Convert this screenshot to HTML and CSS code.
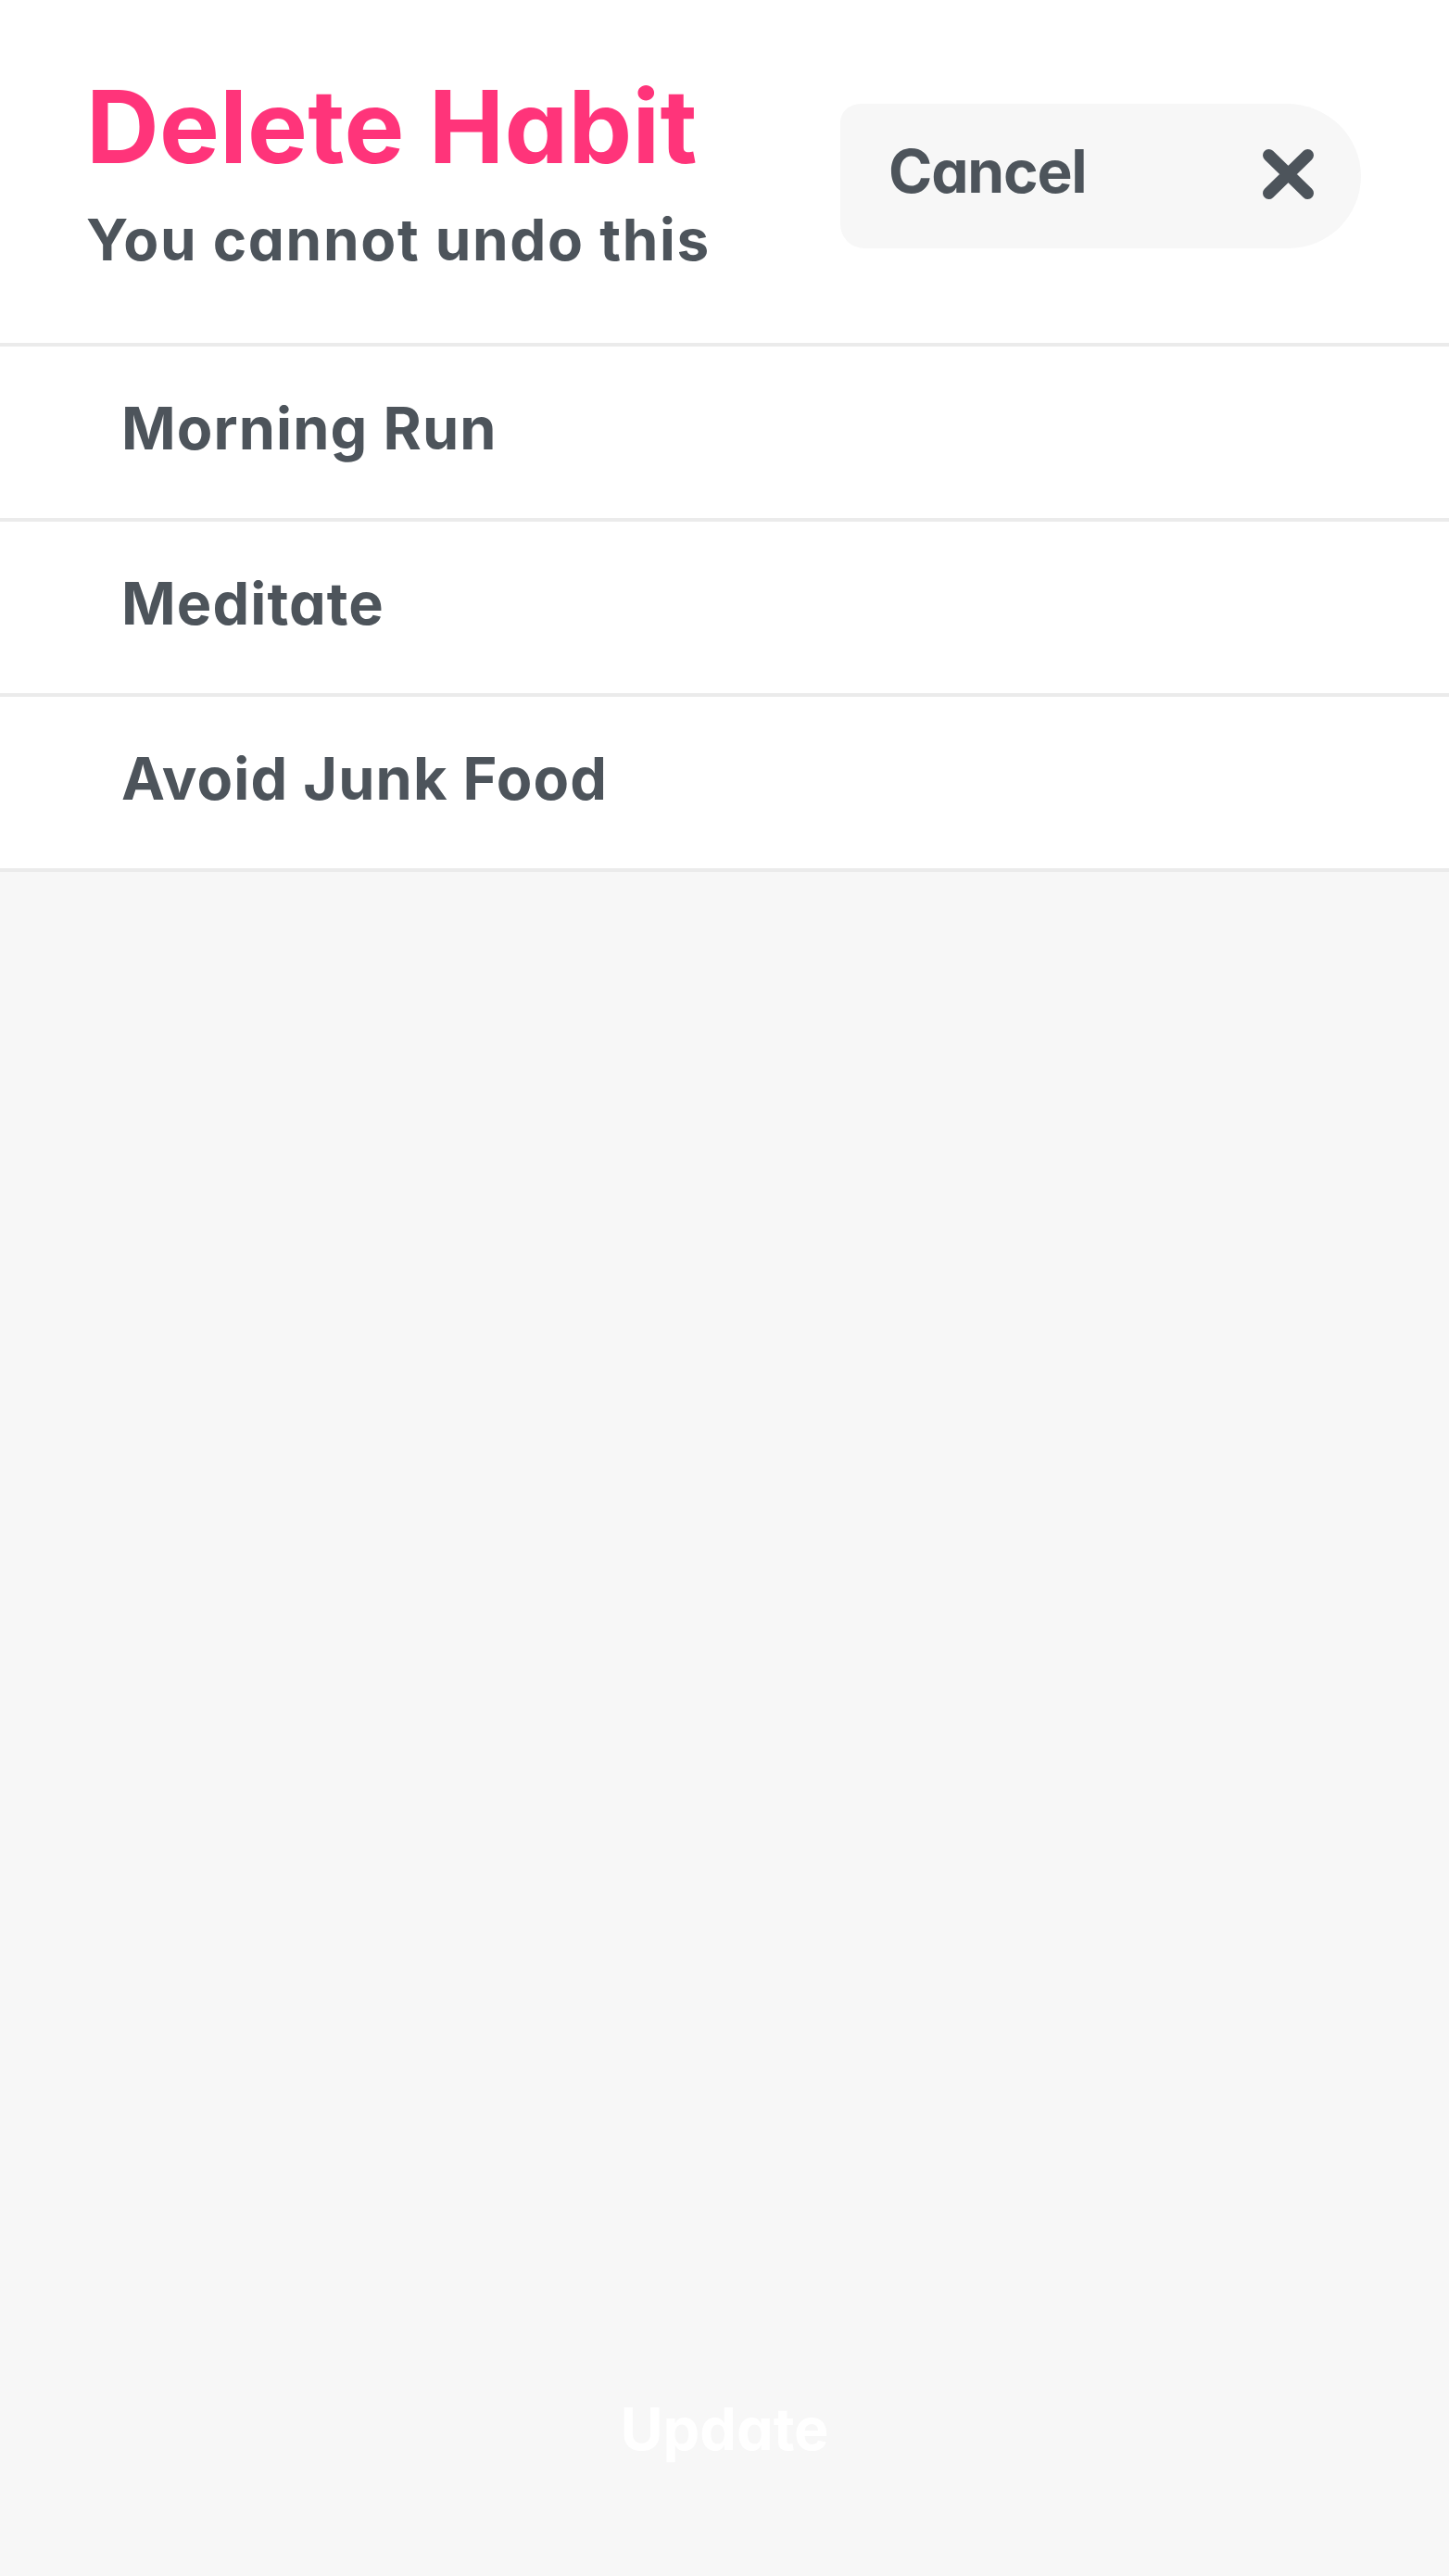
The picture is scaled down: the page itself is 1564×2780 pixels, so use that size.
FILE: index.html
```html
<!DOCTYPE html>
<html lang="en">
<head>
<meta charset="utf-8">
<title>Delete Habit</title>
<link rel="stylesheet" href="styles.css">
</head>
<body>
  <div class="screen">
    <header class="header">
      <div class="heading">
        <h1 class="title">Delete Habit</h1>
        <p class="subtitle">You cannot undo this</p>
      </div>
      <button class="cancel" type="button">
        <span class="cancel-label">Cancel</span>
        <svg class="cancel-icon" width="55" height="54" viewBox="0 0 55 54" aria-hidden="true">
          <path d="M6.5 6.5 L48.5 47.5 M48.5 6.5 L6.5 47.5" fill="none" stroke="currentColor" stroke-width="13" stroke-linecap="round"/>
        </svg>
      </button>
    </header>
    <ul class="habits">
      <li class="habit">Morning Run</li>
      <li class="habit">Meditate</li>
      <li class="habit">Avoid Junk Food</li>
    </ul>
    <div class="rest">
      <button class="update" type="button">Update</button>
    </div>
  </div>
</body>
</html>
```
FILE: styles.css
```css
html, body {
  margin: 0;
  padding: 0;
  height: 100%;
}

body {
  font-family: "Inter", "Noto Sans", sans-serif;
  font-feature-settings: "cv11" 1;
  color: #4d545b;
  background: #f7f7f7;
}

.screen {
  display: flex;
  flex-direction: column;
  min-height: 100vh;
}

.header {
  display: flex;
  justify-content: space-between;
  align-items: flex-start;
  background: #ffffff;
  padding: 82px 95px 80px 93px;
  border-bottom: 4px solid #ebebeb;
}

.title {
  margin: 0 0 37px;
  font-size: 109px;
  line-height: 109px;
  font-weight: 700;
  color: #ff347a;
  letter-spacing: 0.3px;
}

.subtitle {
  margin: 0;
  font-size: 62px;
  line-height: 62px;
  font-weight: 700;
  letter-spacing: 1.7px;
  color: #4d545b;
}

.cancel {
  display: flex;
  align-items: center;
  justify-content: space-between;
  width: 562px;
  height: 156px;
  margin-top: 30px;
  padding: 0 51px 0 52px;
  box-sizing: border-box;
  border: none;
  background: #f7f7f7;
  border-radius: 22px 80px 78px 26px / 20px 78px 78px 26px;
  font-family: inherit;
  font-feature-settings: inherit;
  color: #4d545b;
  cursor: pointer;
}

.cancel-label {
  margin-bottom: 11px;
  font-size: 64px;
  line-height: 64px;
  font-weight: 700;
  letter-spacing: -1.2px;
}

.cancel-icon {
  display: block;
  margin-bottom: 4px;
}

.habits {
  list-style: none;
  margin: 0;
  padding: 0;
}

.habit {
  background: #ffffff;
  padding: 57px 0 65px 131px;
  font-size: 63px;
  line-height: 63px;
  font-weight: 700;
  letter-spacing: 1.1px;
  border-bottom: 4px solid #ebebeb;
}

.rest {
  flex: 1;
  display: flex;
  flex-direction: column;
  justify-content: flex-end;
  align-items: center;
  padding-bottom: 127px;
}

.update {
  border: none;
  background: transparent;
  padding: 0;
  font-family: inherit;
  font-feature-settings: inherit;
  font-size: 63px;
  line-height: 63px;
  font-weight: 700;
  color: #ffffff;
  cursor: pointer;
}
```
